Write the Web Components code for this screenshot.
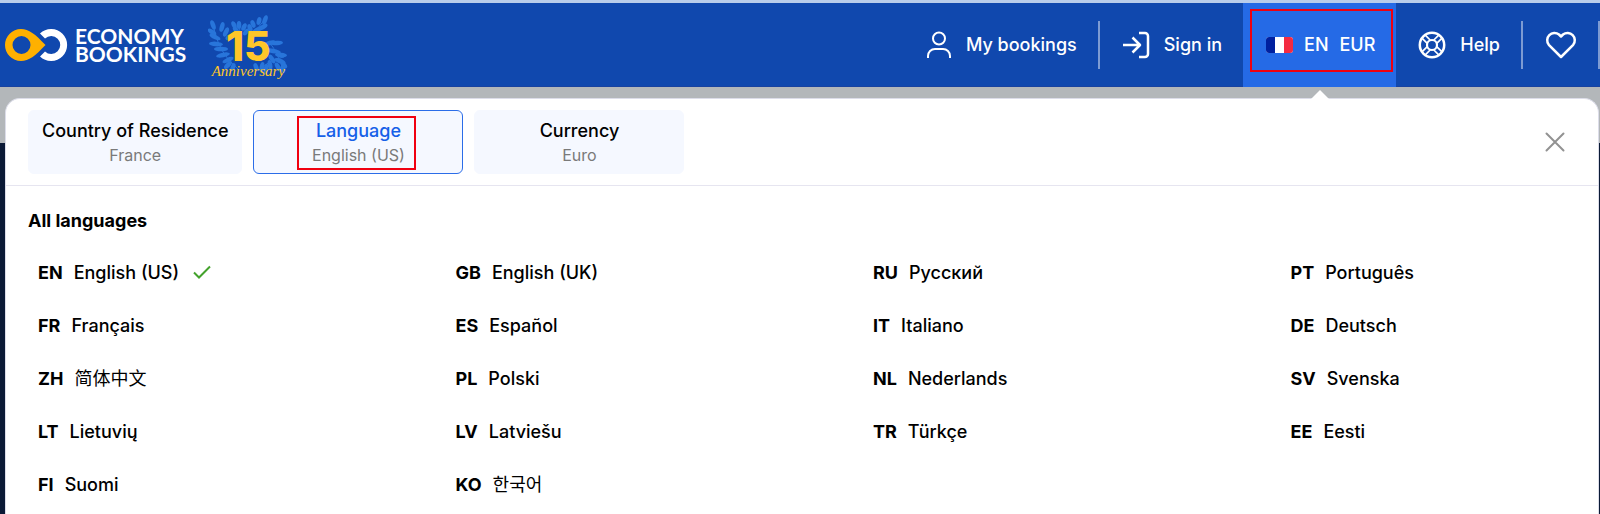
<!DOCTYPE html>
<html lang="en">
<head>
<meta charset="utf-8">
<meta name="viewport" content="width=device-width, initial-scale=1">
<title>Economy Bookings – Language</title>
<style>
  body { margin: 0; font-family: Inter, "Noto Sans CJK SC", "Noto Sans CJK KR", sans-serif; color: #000; }
</style>
</head>
<body>
<eb-app></eb-app>
<script>
const define = (name, html) => {
  const t = document.createElement('template');
  t.innerHTML = html;
  customElements.define(name, class extends HTMLElement {
    constructor() {
      super();
      this.attachShadow({ mode: 'open' }).append(t.content.cloneNode(true));
    }
  });
};

define('eb-logo', `
<style>
  :host { display: block; }
  a { display: flex; align-items: center; gap: 6px; color: #fff; text-decoration: none; }
  svg { display: block; }
  span { font: 700 21px/18px Lato, sans-serif; }
</style>
<a href="#" aria-label="Economy Bookings">
  <svg width="64" height="32" viewBox="0 0 64 32">
    <path fill="#fff" d="M35 4.500A16 16 0 1 1 35 27.500L40 22.500A9 9 0 1 0 40 9.500Z"/>
    <path fill="#ffb000" fill-rule="evenodd" d="M16 0C24 0 30 5 40.500 16C30 27 24 32 16 32A16 16 0 1 1 16 0ZM16.500 7A9 9 0 1 0 16.500 25A9 9 0 1 0 16.500 7Z"/>
  </svg>
  <span>ECONOMY<br>BOOKINGS</span>
</a>`);

customElements.define('eb-anniversary', class extends HTMLElement {
  constructor() {
    super();
    // x, y, rotation, half length of each leaf of the wreath
    const leaves = [
      [5,10,70,5],[14,12,105,5],[4,17,35,5],[18,17,115,5],[7,22,25,6],[21,22,140,4],[8,29,5,7],[13,34,0,7],[15,40,-12,7],[20,45,-25,6],[20,50,-45,5],[25,52,-70,4],
      [26,10,65,4],[31,10,90,4],[36,12,115,4],[28,15,50,4],[38,17,130,4],
      [45,9,70,4],[51,6,105,4],[57,5,110,5],[55,12,150,5],[49,15,150,6],[42,13,70,4],
      [62,28,-15,6],[69,28,-5,6],[65,36,10,8],[73,40,5,6],[64,44,55,5],[72,46,20,6],[62,50,80,5],[70,52,60,5],[76,50,50,4],[75,54,80,4],[54,52,100,5],[48,52,70,4],[58,54,100,5]
    ].map(([x, y, r, l]) => `<ellipse cx="${x}" cy="${y}" rx="${l}" ry="2.300" transform="rotate(${r} ${x} ${y})"/>`).join('');
    this.attachShadow({ mode: 'open' }).innerHTML = `
<style>
  :host { display: grid; justify-items: center; }
  svg { grid-area: 1 / 1; margin-top: 4px; }
  .text { grid-area: 1 / 1; display: flex; flex-direction: column; align-items: center; color: #ffc629; position: relative; }
  b { font: 800 41px/50px Inter, sans-serif; margin-top: 10px; height: 42px; }
  i { font: italic 400 15px/16px "Liberation Serif", serif; }
</style>
<svg width="80" height="64" viewBox="0 0 80 64" aria-hidden="true">
  <g fill="#2875da">${leaves}</g>
  <path d="M5 10Q10 38 30 54M31 10Q33 16 30 26M57 4Q50 12 46 20M62 28Q70 38 76 58M76 42Q62 44 50 56" fill="none" stroke="#2875da"/>
</svg>
<div class="text"><b>15</b><i>Anniversary</i></div>`;
  }
});

define('eb-nav-item', `
<style>
  :host { display: flex; }
  button { all: unset; box-sizing: border-box; display: flex; align-items: center; gap: 14px; padding: 0 21px 0 22px; color: #fff; font-size: 18px; font-weight: 500; line-height: 24px; white-space: nowrap; cursor: pointer; }
  :host([active]) button { background: #256ae6; padding: 0 21px 0 23px; gap: 11px; position: relative; }
  .mark { display: none; }
  :host([active]) .mark { display: block; position: absolute; inset: 6px 3px 15px 7px; border: 2px solid #f00010; }
  :host([active]) button::after { content: ""; position: absolute; left: 50%; top: 100%; margin: 3px 0 0 -9px; border: 9px solid transparent; border-top: 0; border-bottom-color: #fff; z-index: 1; }
  :host([divided]) { position: relative; }
  :host([divided])::after { content: ""; align-self: center; width: 2px; height: 48px; background: #7d9bd3; }
</style>
<button type="button"><slot name="icon"></slot><slot></slot><span class="mark"></span></button>`);

define('eb-header', `
<style>
  :host { display: flex; justify-content: space-between; height: 84px; background: #1048ae; border-top: 3px solid #b9cdeb; box-shadow: inset 0 -1px #1842a0; }
  .brand, nav { display: flex; }
  .brand { gap: 22px; padding-left: 5px; align-items: center; }
  svg { display: block; fill: none; stroke: #fff; stroke-width: 2; }
</style>
<div class="brand"><eb-logo></eb-logo><eb-anniversary></eb-anniversary></div>
<nav aria-label="Account">
  <eb-nav-item divided><svg slot="icon" width="26" height="28" viewBox="0 0 26 28"><circle cx="13" cy="7.500" r="6"/><path d="M2 27v-2a7 7 0 0 1 7-7h8a7 7 0 0 1 7 7v2"/></svg>My bookings</eb-nav-item>
  <eb-nav-item><svg slot="icon" width="28" height="28" viewBox="0 0 28 28" stroke-linejoin="round"><path stroke-width="2.500" d="M1 14h17M10.500 6.500 18 14l-7.500 7.500M17 2h6a3 3 0 0 1 3 3v18a3 3 0 0 1-3 3h-6"/></svg>Sign in</eb-nav-item>
  <eb-nav-item active><svg slot="icon" width="27" height="16" viewBox="0 0 27 16" style="stroke:none"><rect width="27" height="16" rx="3" fill="#fff"/><path fill="#00209f" d="M3 0h6v16H3a3 3 0 0 1-3-3V3a3 3 0 0 1 3-3z"/><path fill="#f42a41" d="M18 0h6a3 3 0 0 1 3 3v10a3 3 0 0 1-3 3h-6z"/></svg><span>EN</span><span>EUR</span></eb-nav-item>
  <eb-nav-item divided><svg slot="icon" width="28" height="28" viewBox="0 0 28 28"><circle stroke-width="2.500" cx="14" cy="14" r="12.200"/><circle stroke-width="2.200" cx="14" cy="14" r="5"/><path d="M11.800 2v7.500M16.200 2v7.500M11.800 26v-7.500M16.200 26v-7.500M2 11.800h7.500M2 16.200h7.500M26 11.800h-7.500M26 16.200h-7.500" stroke-width="1.700" transform="rotate(45 14 14)"/></svg>Help</eb-nav-item>
  <eb-nav-item divided aria-label="Favourites"><svg slot="icon" width="32" height="28" viewBox="0 0 32 28"><path stroke-width="2.500" stroke-linejoin="round" d="M16 26 3.800 13.800A7.300 7.300 0 0 1 14 3.500l2 2 2-2a7.300 7.300 0 0 1 10.200 10.300z"/></svg></eb-nav-item>
</nav>`);

define('eb-tab', `
<style>
  :host { display: block; }
  button { all: unset; box-sizing: border-box; display: flex; flex-direction: column; align-items: center; width: 100%; min-width: 210px; height: 64px; padding: 8px 13px 6px; border: 1px solid #f5f8ff; border-radius: 6px; background: #f5f8ff; font-size: 16px; line-height: 24px; color: #7a7a7a; white-space: nowrap; cursor: pointer; position: relative; }
  ::slotted(strong) { font-size: 18px; font-weight: 500; color: #000; }
  :host([selected]) button { border-color: #2b6de8; }
  :host([selected]) ::slotted(strong) { color: #1660e8; }
  :host([selected]) button::after { content: ""; position: absolute; inset: 5px 46px 3px 43px; border: 2px solid #f00010; }
</style>
<button type="button"><slot></slot></button>`);

define('eb-language', `
<style>
  :host { display: block; }
  button { all: unset; box-sizing: border-box; display: flex; align-items: center; gap: 11px; width: 100%; height: 53px; padding: 0 10px; font-size: 18px; font-weight: 500; line-height: 24px; white-space: nowrap; cursor: pointer; }
  ::slotted(b) { font-weight: 700; }
  ::slotted([lang]) { font-weight: 400; }
  svg { display: none; margin: 0 0 2px 3px; fill: none; stroke: #43a22c; stroke-width: 2; }
  :host([current]) svg { display: block; }
</style>
<button type="button"><slot></slot><svg width="18" height="14" viewBox="0 0 18 14"><path d="M1 7.500 6 12.500 17 1.500"/></svg></button>`);

define('eb-panel', `
<style>
  :host { display: block; box-sizing: border-box; flex: 1; margin: 11px 1px 0 5px; background: #fff; border: 1px solid #dcdde9; border-bottom: 0; border-radius: 15px 15px 0 0; }
  header { display: flex; align-items: center; justify-content: space-between; padding: 11px 33px 11px 22px; border-bottom: 1px solid #e6e5f0; }
  .tabs { display: flex; gap: 11px; }
  .close { all: unset; cursor: pointer; }
  .close svg { display: block; stroke: #929292; stroke-width: 2; stroke-linecap: round; }
  h2 { margin: 0; padding: 23px 22px 13px; font-size: 18px; font-weight: 700; line-height: 24px; }
  .grid { display: grid; grid-template-columns: repeat(4, 1fr); column-gap: 122px; padding: 0 22px; }
</style>
<header>
  <div class="tabs">
    <eb-tab><strong>Country of Residence</strong><span>France</span></eb-tab>
    <eb-tab selected><strong>Language</strong><span>English (US)</span></eb-tab>
    <eb-tab><strong>Currency</strong><span>Euro</span></eb-tab>
  </div>
  <button class="close" type="button" aria-label="Close"><svg width="20" height="20" viewBox="0 0 20 20"><path d="M1.500 1.500 18.500 18.500M18.500 1.500 1.500 18.500"/></svg></button>
</header>
<h2>All languages</h2>
<div class="grid">
  <eb-language current><b>EN</b><span>English (US)</span></eb-language>
  <eb-language><b>GB</b><span>English (UK)</span></eb-language>
  <eb-language><b>RU</b><span>Русский</span></eb-language>
  <eb-language><b>PT</b><span>Português</span></eb-language>
  <eb-language><b>FR</b><span>Français</span></eb-language>
  <eb-language><b>ES</b><span>Español</span></eb-language>
  <eb-language><b>IT</b><span>Italiano</span></eb-language>
  <eb-language><b>DE</b><span>Deutsch</span></eb-language>
  <eb-language><b>ZH</b><span lang="zh">简体中文</span></eb-language>
  <eb-language><b>PL</b><span>Polski</span></eb-language>
  <eb-language><b>NL</b><span>Nederlands</span></eb-language>
  <eb-language><b>SV</b><span>Svenska</span></eb-language>
  <eb-language><b>LT</b><span>Lietuvių</span></eb-language>
  <eb-language><b>LV</b><span>Latviešu</span></eb-language>
  <eb-language><b>TR</b><span>Türkçe</span></eb-language>
  <eb-language><b>EE</b><span>Eesti</span></eb-language>
  <eb-language><b>FI</b><span>Suomi</span></eb-language>
  <eb-language><b>KO</b><span lang="ko">한국어</span></eb-language>
</div>`);

define('eb-app', `
<style>
  :host { display: flex; flex-direction: column; min-height: 100vh; background: linear-gradient(#b3b7ba 143px, #0b1a36 143px); }
</style>
<eb-header></eb-header>
<eb-panel></eb-panel>`);
</script>
</body>
</html>
